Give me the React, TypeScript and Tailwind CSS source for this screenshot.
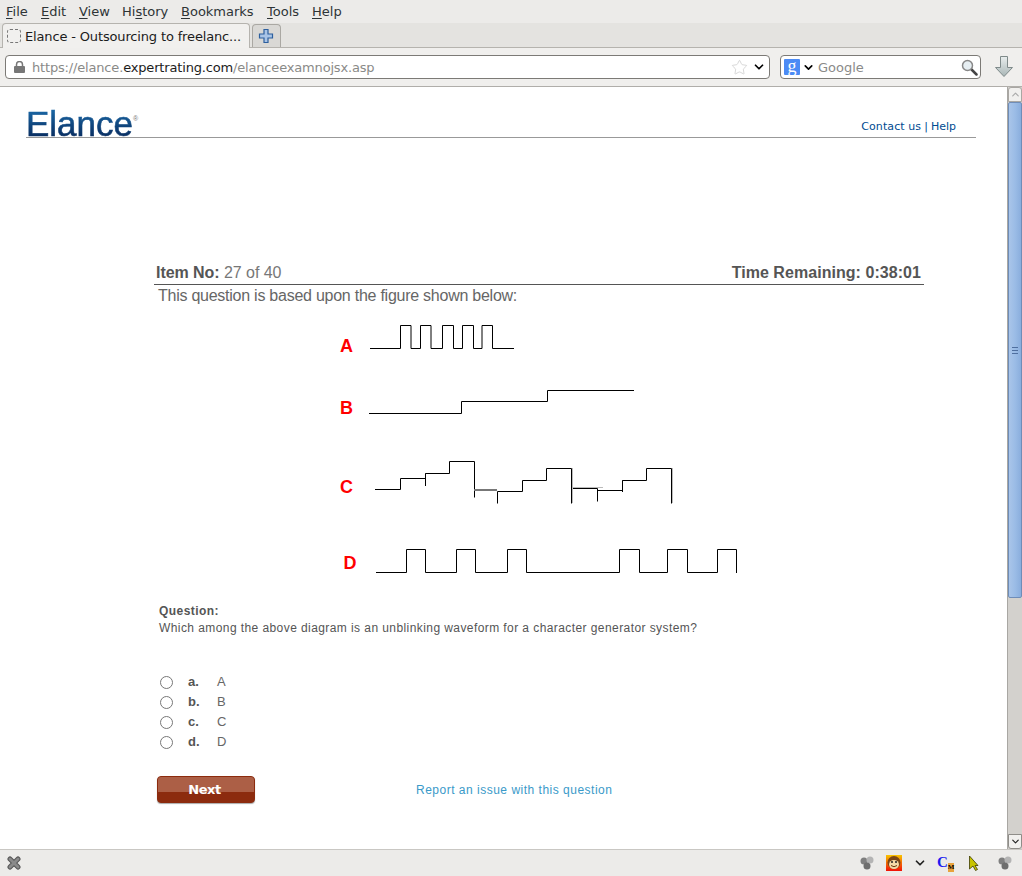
import { ChevronDown, ChevronUp, Star } from "lucide-react";

const menuItems = [
  { pre: "", key: "F", post: "ile", cls: "w-[35px]" },
  { pre: "", key: "E", post: "dit", cls: "w-[38px]" },
  { pre: "", key: "V", post: "iew", cls: "w-[43px]" },
  { pre: "Hi", key: "s", post: "tory", cls: "w-[59px]" },
  { pre: "", key: "B", post: "ookmarks", cls: "w-[86px]" },
  { pre: "", key: "T", post: "ools", cls: "w-[45px]" },
  { pre: "", key: "H", post: "elp", cls: "w-[40px]" },
];

const answers = [
  { key: "a.", text: "A" },
  { key: "b.", text: "B" },
  { key: "c.", text: "C" },
  { key: "d.", text: "D" },
];

const waveA = "M370 348.5H400.5V325.5H411V348.5H420.5V325.5H431V348.5H442.5V325.5H453.5V348.5H462.5V325.5H473.5V348.5H482V325.5H492.5V348.5H514";
const waveB = "M369 413.5H461.5V401.5H547.5V390.5H634";
const waveC = "M375 489.5H400.5V478.5H425.5V473.5H449.5V461.5H474.5V497.5M497.5 503.5V491.5H522.5V480.5H546.5V468.5H571.5V503.5M571.5 488.5H597.5V501.5M597.5 490.5H622.5V480.5H646.5V468.5H671.5V503.5M425.5 473.5V486M622.5 480.5V492";
const waveD = "M376 572.5H406.5V549.5H425.5V572.5H456.5V549.5H475.5V572.5H507.5V549.5H526.5V572.5H619.5V549.5H639.5V572.5H667.5V549.5H687.5V572.5H717.5V549.5H736.5V573";

function Figure() {
  return (
    <svg width="420" height="270" viewBox="330 315 420 270" className="block">
      <g fill="none" stroke="#000" strokeWidth="1">
        <path d={waveA} />
        <path d={waveB} />
        <path d={waveC} />
        <path d={waveD} />
      </g>
      <path d="M474 490H497" stroke="#777" strokeWidth="2" fill="none" />
      <path d="M572.5 468V503" stroke="#bbb" strokeWidth="1" fill="none" />
      <path d="M572 487.5H603" stroke="#bbb" strokeWidth="1" fill="none" />
      <path d="M672.5 468V503" stroke="#bbb" strokeWidth="1" fill="none" />
      <g fill="#ff0000" fontFamily="'Liberation Sans', sans-serif" fontWeight="700" fontSize="18">
        <text x="340" y="352">A</text>
        <text x="340" y="414">B</text>
        <text x="340" y="493">C</text>
        <text x="343.5" y="569">D</text>
      </g>
    </svg>
  );
}

function Toolbar() {
  return (
    <div className="flex flex-col bg-[#ecebe9] font-['DejaVu_Sans',sans-serif] text-[13px] text-[#2e3436]">
      <div className="flex h-[23px] items-center pl-[6px] pt-px">
        {menuItems.map((m) => (
          <span key={m.key} className={m.cls}>
            {m.pre}
            <span className="underline underline-offset-2">{m.key}</span>
            {m.post}
          </span>
        ))}
      </div>
      <div className="flex h-[25px] items-end border-b border-[#b5b3ae] bg-[#e4e3e0] pl-[2px]">
        <div className="-mb-px flex h-[25px] w-[248px] items-center rounded-t-[4px] border border-b-0 border-[#b5b3ae] bg-[#f1f0ee] pl-[4px]">
          <span className="h-[14px] w-[14px] rounded-[3px] border border-dashed border-[#777]"></span>
          <span className="ml-[4px] pt-px tracking-[-0.15px] text-[#1c1c1c]">Elance - Outsourcing to freelanc...</span>
        </div>
        <div className="ml-[2px] flex h-[23px] w-[29px] items-center justify-center rounded-t-[4px] border border-b-0 border-[#aaa8a3] bg-[#d9d8d5] pr-[2px]">
          <svg width="16" height="16" viewBox="0 0 16 16">
            <path d="M6 1.500h4v4.500h4.500v4H10v4.500H6V10H1.500V6H6z" fill="#a9c4e6" stroke="#2d5f9e" strokeWidth="1.200" />
          </svg>
        </div>
      </div>
      <div className="flex h-[39px] items-center border-b border-[#b0aeaa] bg-[#f0efed] pl-[5px]">
        <div className="flex h-[24px] w-[765px] items-center rounded-[4px] border border-[#7c7a76] bg-white pl-[8px] pr-[3px]">
          <svg width="11" height="12" viewBox="0 0 11 12">
            <path d="M2.500 5.500V3.500a3 3 0 0 1 6 0v2" fill="none" stroke="#777" strokeWidth="1.500" />
            <rect x="0" y="5" width="11" height="7" rx="1" fill="#777" />
          </svg>
          <span className="ml-[7px] pt-px tracking-[-0.17px] text-[#8a8a88]">
            https://elance.<span className="text-[#1c1c1c]">expertrating.com</span>/elanceexamnojsx.asp
          </span>
          <Star size={17} strokeWidth={1} className="ml-auto text-[#c8c8c8]" />
          <ChevronDown size={14} strokeWidth={3} className="ml-[4px] text-black" />
        </div>
        <div className="ml-[10px] flex h-[24px] w-[201px] items-center rounded-[4px] border border-[#7c7a76] bg-white pl-[3px] pr-[2px]">
          <span className="flex h-[16px] w-[16px] items-center justify-center rounded-[1px] bg-[#4c8bf5] pb-[3px] font-['Liberation_Serif',serif] text-[18px] leading-none text-white">g</span>
          <ChevronDown size={13} strokeWidth={3} className="ml-[2px] text-black" />
          <span className="ml-[3px] pt-px text-[#8a8a88]">Google</span>
          <svg width="17" height="17" viewBox="0 0 17 17" className="ml-auto">
            <path d="M10.500 10.500l5 5" stroke="#444" strokeWidth="2.500" strokeLinecap="round" />
            <circle cx="6.500" cy="6.500" r="5" fill="#e6eef2" stroke="#888" strokeWidth="1.500" />
          </svg>
        </div>
        <svg width="20" height="24" viewBox="0 0 20 24" className="ml-[13px]">
          <defs>
            <linearGradient id="dl" x1="0" y1="0" x2="0" y2="1">
              <stop offset="0" stopColor="#e9eeee" />
              <stop offset="1" stopColor="#a9b6b6" />
            </linearGradient>
          </defs>
          <path d="M6.500 1.500h7v11h5L10 21.500 1.500 12.500h5z" fill="url(#dl)" stroke="#7f8a8a" />
        </svg>
      </div>
    </div>
  );
}

function Scrollbar() {
  return (
    <div className="flex w-[15px] shrink-0 flex-col border-l border-[#a9a7a3] bg-[#d3d1cd]">
      <div className="flex h-[15px] items-center justify-center rounded-t-[3px] border border-[#a9a7a3] bg-[#f1f0ee]">
        <ChevronUp size={11} strokeWidth={2.500} className="text-[#aaa]" />
      </div>
      <div className="flex h-[496px] flex-col items-center justify-center gap-[2px] rounded-[2px] border border-[#6f8db8] bg-gradient-to-r from-[#a9c5e9] via-[#9bbce6] to-[#8aaedd]">
        <span className="h-px w-[6px] bg-[#4f6f9f]"></span>
        <span className="h-px w-[6px] bg-[#4f6f9f]"></span>
        <span className="h-px w-[6px] bg-[#4f6f9f]"></span>
      </div>
      <div className="flex-1"></div>
      <div className="flex h-[15px] items-center justify-center rounded-b-[3px] border border-[#8f8d89] bg-[#f1f0ee]">
        <ChevronDown size={11} strokeWidth={2.500} className="text-[#222]" />
      </div>
    </div>
  );
}

function StatusBar() {
  return (
    <div className="flex h-[27px] items-center border-t border-[#c9c7c3] bg-[#ecebe9] pl-[7px]">
      <svg width="14" height="14" viewBox="0 0 14 14">
        <path d="M3 3l8 8M11 3l-8 8" stroke="#555" strokeWidth="5" strokeLinecap="round" />
        <path d="M3 3l8 8M11 3l-8 8" stroke="#8a8a8a" strokeWidth="3" strokeLinecap="round" />
      </svg>
      <div className="ml-auto flex items-center">
        <Gears />
        <svg width="16" height="16" viewBox="0 0 16 16" className="ml-[12px]">
          <defs>
            <linearGradient id="mk" x1="0" y1="0" x2="0" y2="1">
              <stop offset="0" stopColor="#f8c400" />
              <stop offset="1" stopColor="#f01008" />
            </linearGradient>
          </defs>
          <rect width="16" height="16" fill="url(#mk)" />
          <circle cx="8" cy="7.500" r="6.500" fill="#7a4516" />
          <ellipse cx="8" cy="9.500" rx="5" ry="4.500" fill="#f4d9a8" />
          <circle cx="6" cy="7" r="1" fill="#222" />
          <circle cx="10" cy="7" r="1" fill="#222" />
          <path d="M5 10.500q3 2.500 6 0" fill="none" stroke="#6b3a10" strokeWidth="1" />
        </svg>
        <ChevronDown size={14} strokeWidth={3} className="ml-[11px] text-[#222]" />
        <span className="ml-[10px] flex h-[17px] w-[18px] items-end font-['Liberation_Serif',serif] font-bold leading-none">
          <span className="self-start text-[15px] text-[#1b1bf0]">C</span>
          <span className="bg-[#e8a33c] text-[7px] leading-[9px] text-black">M</span>
        </span>
        <svg width="10" height="16" viewBox="0 0 10 16" className="ml-[14px]">
          <path d="M0.500 1l8.500 9.500H6l2.500 4-2 1-2.500-4.500-3.500 3z" fill="#c8c400" stroke="#3a3a00" strokeWidth="0.800" />
        </svg>
        <span className="ml-[19px] mr-[10px]">
          <Gears />
        </span>
      </div>
    </div>
  );
}

function Gears() {
  return (
    <svg width="14" height="14" viewBox="0 0 14 14" className="block">
      <circle cx="4" cy="5" r="3.500" fill="#7f7f7f" />
      <circle cx="10" cy="4" r="3.500" fill="#b4b4b4" />
      <circle cx="7" cy="10" r="3.500" fill="#6e6e6e" />
    </svg>
  );
}

export default function App() {
  return (
    <div className="flex h-[876px] w-[1022px] flex-col overflow-hidden bg-white font-['Liberation_Sans',sans-serif] text-[#555]">
      <Toolbar />
      <div className="flex min-h-0 flex-1">
        <main className="min-w-0 flex-1">
          <div className="ml-[26px] mr-[31px] flex h-[51px] items-end justify-between border-b border-[#999]">
            <span className="relative mb-[-7px] bg-gradient-to-b from-[#1f75b5] to-[#061f50] bg-clip-text text-[35px] leading-[40px] text-transparent [-webkit-text-stroke:0.6px_transparent]">
              Elance
              <span className="absolute left-[107px] top-[11px] text-[7px] leading-none text-[#777] [-webkit-text-stroke:0]">®</span>
            </span>
            <span className="mb-[4px] mr-[20px] font-['DejaVu_Sans',sans-serif] text-[11px] leading-[13px] text-[#004b91]">
              <span className="tracking-[0.1px]">Contact us</span>
              <span className="mx-[3px]">|</span>
              Help
            </span>
          </div>

          <div className="ml-[154px] mt-[125px] w-[770px]">
            <div className="flex h-[22px] items-center justify-between border-b border-[#555] pb-[2px] pl-[2px] pr-[3px] text-[16px] leading-[18px]">
              <span className="tracking-[-0.05px]">
                <b>Item No:</b> <span className="text-[#777]">27 of 40</span>
              </span>
              <b className="tracking-[0.05px]">Time Remaining: 0:38:01</b>
            </div>
            <p className="pl-[4px] text-[16px] leading-[22px] tracking-[-0.25px] text-[#666]">This question is based upon the figure shown below:</p>
          </div>

          <div className="ml-[330px] mt-[8px]">
            <Figure />
          </div>

          <div className="ml-[159px] mt-[18px] text-[12px] leading-[16px]">
            <p className="font-bold tracking-[0.45px]">Question:</p>
            <p className="mt-px tracking-[0.42px]">Which among the above diagram is an unblinking waveform for a character generator system?</p>
          </div>

          <div className="ml-[160px] mt-[36px] flex flex-col text-[13px]">
            {answers.map((a) => (
              <div key={a.key} className="flex h-[20px] items-center">
                <span className="h-[13px] w-[13px] rounded-full border border-[#777] bg-white"></span>
                <b className="ml-[15px] w-[29px]">{a.key}</b>
                <span className="text-[#666]">{a.text}</span>
              </div>
            ))}
          </div>

          <div className="ml-[157px] mt-[24px] flex items-center">
            <div className="relative flex h-[27px] w-[98px] items-center justify-center overflow-hidden rounded-[4px] border border-[#8c2b0e] bg-[#8c2b0e] shadow-[0_1px_1px_#aaa]">
              <span className="absolute inset-x-0 top-0 h-[15px] bg-[#ac5f46]"></span>
              <span className="relative pr-[3px] font-['DejaVu_Sans',sans-serif] text-[13px] font-bold tracking-[-0.5px] text-white">Next</span>
            </div>
            <span className="ml-[161px] text-[12px] tracking-[0.5px] text-[#3a9ac9]">Report an issue with this question</span>
          </div>
        </main>
        <Scrollbar />
      </div>
      <StatusBar />
    </div>
  );
}
